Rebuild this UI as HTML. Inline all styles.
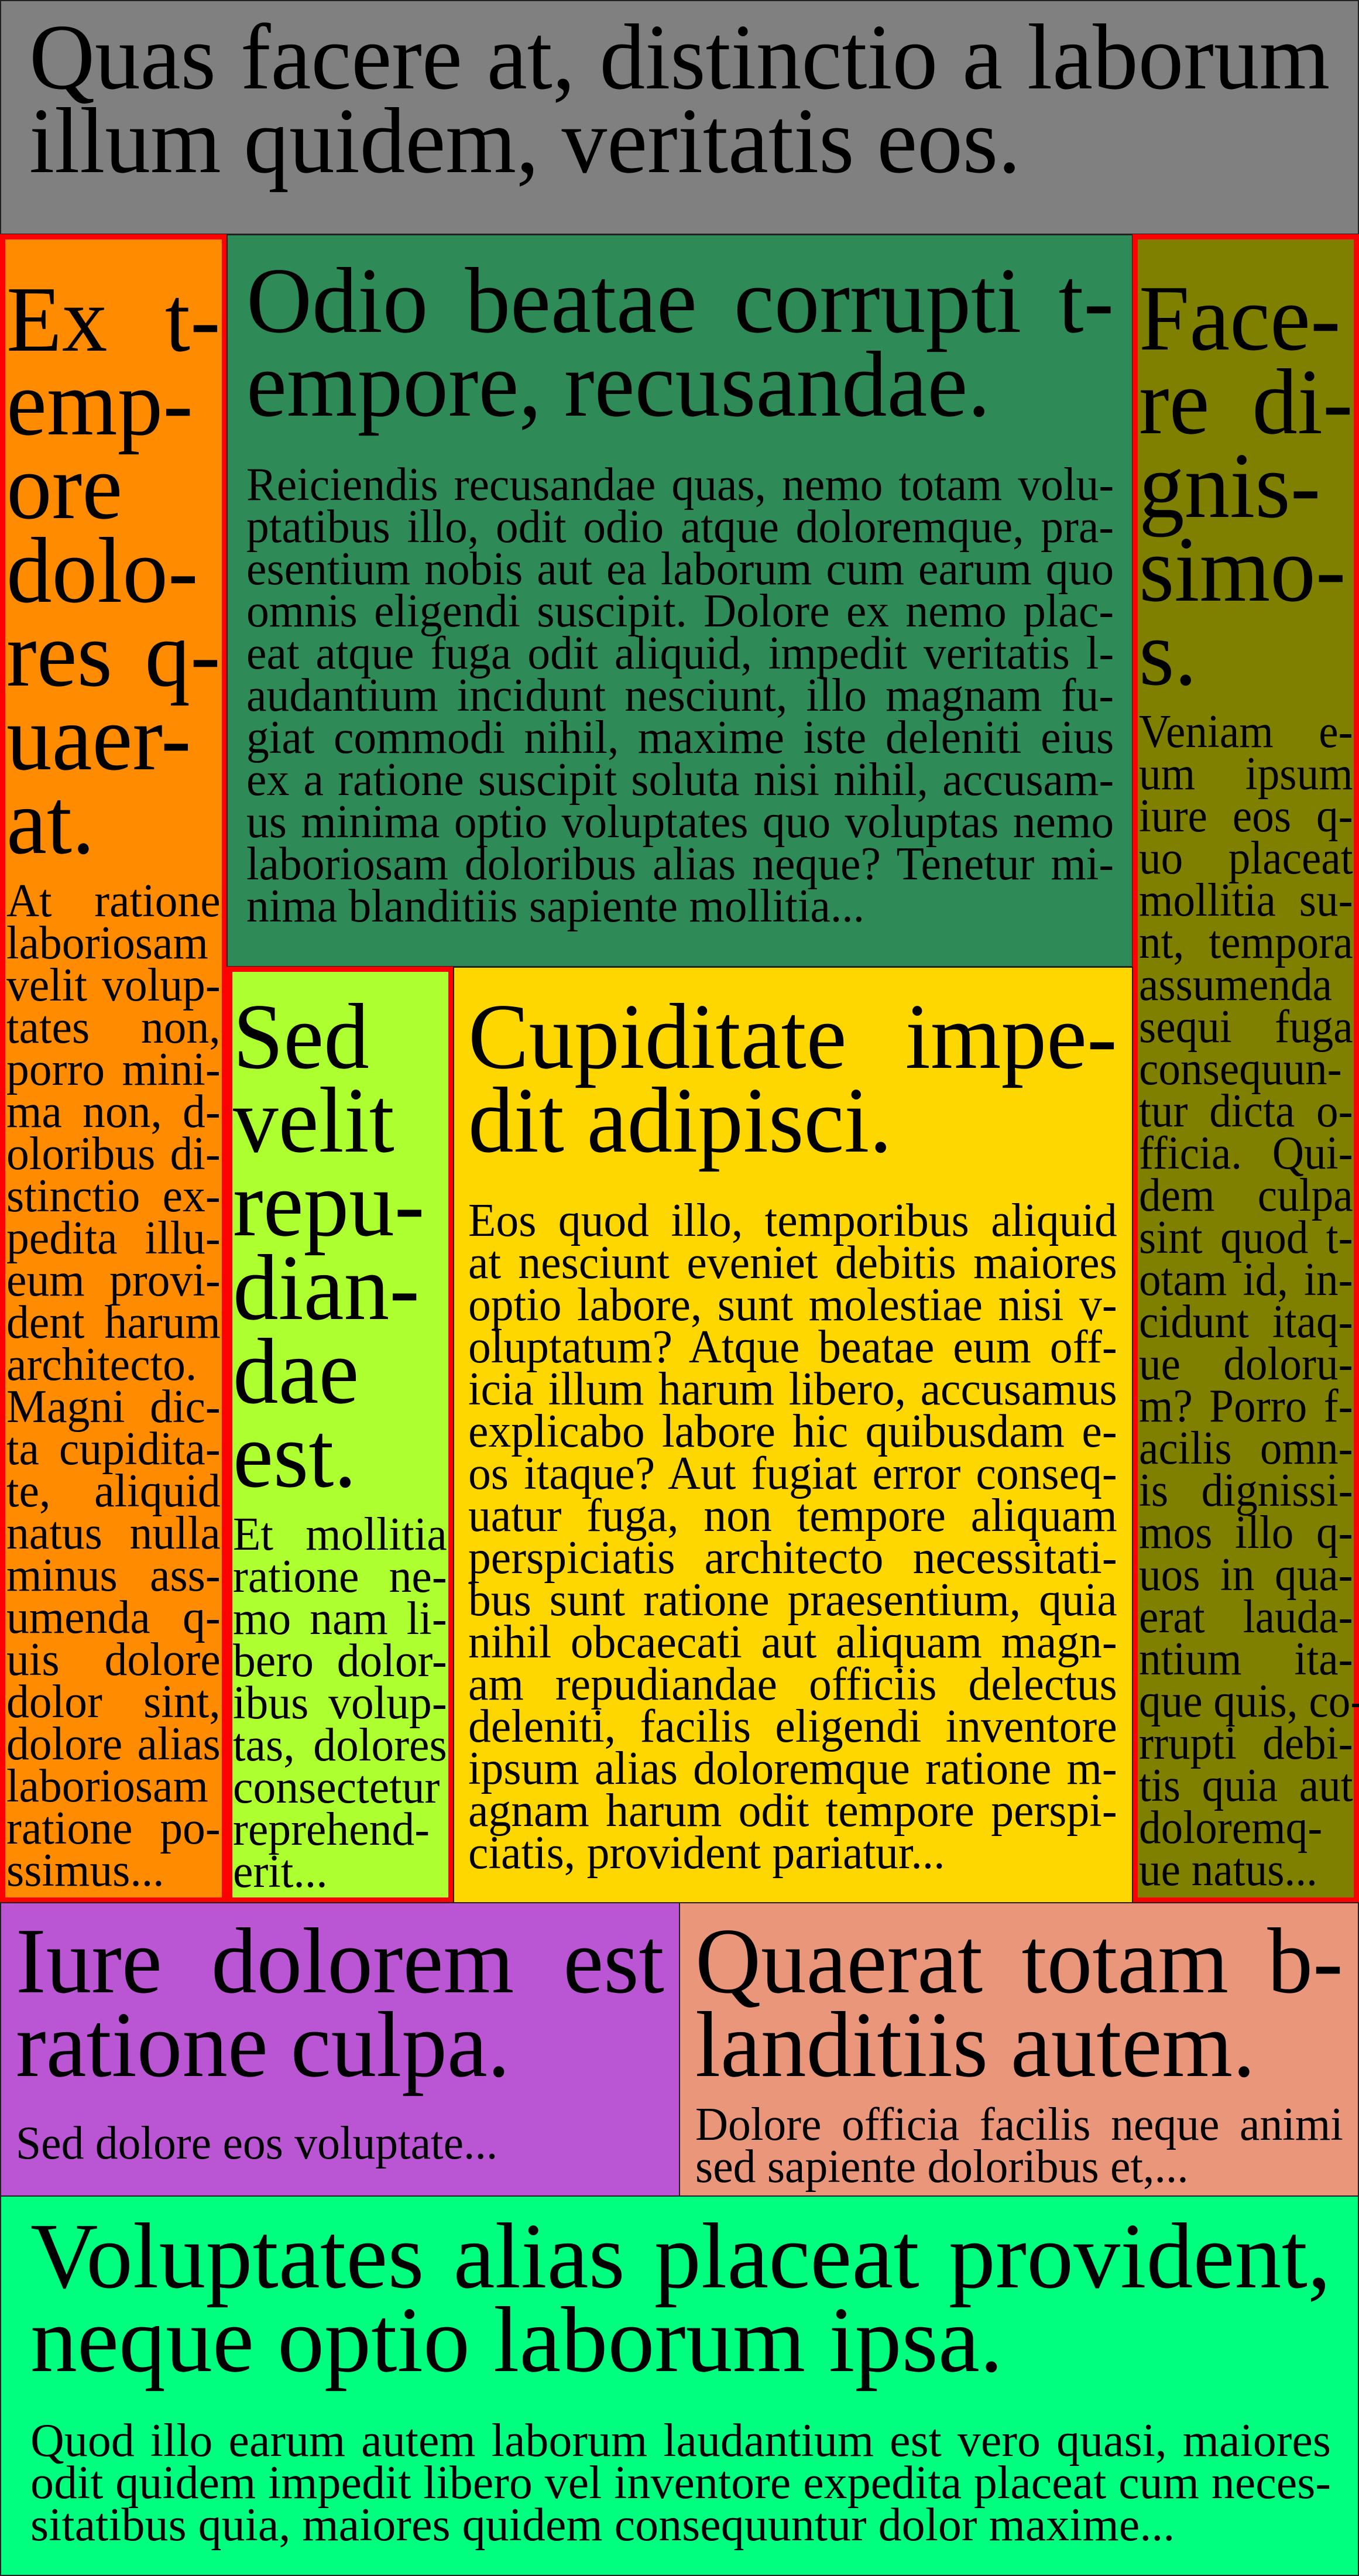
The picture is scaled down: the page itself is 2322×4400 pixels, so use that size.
<!DOCTYPE html>
<html><head><meta charset="utf-8">
<style>
html,body{margin:0;padding:0;}
body{width:2322px;height:4400px;position:relative;overflow:hidden;font-family:"Liberation Serif","Times New Roman",serif;color:#000;}
.box{position:absolute;box-sizing:border-box;}
.blk{border:2px solid #222;}
.red{border:9px solid #ff0000;}
.t{position:absolute;transform-origin:0 0;}
.s{transform:scaleX(0.97);}
.s2{transform:scaleX(0.94);}
.h{font-size:160px;line-height:143px;}
.b{font-size:80px;line-height:72px;}
.t div{white-space:nowrap;text-align:left;}
.t div.j{text-align:justify;text-align-last:justify;}
</style></head><body>

<div class="box blk" style="left:0;top:0;width:2322px;height:401px;background:#808080;"></div>
<div class="box red" style="left:0;top:400px;width:388px;height:2850px;background:#ff8c00;"></div>
<div class="box blk" style="left:387px;top:400px;width:1549px;height:1252px;background:#2e8b57;"></div>
<div class="box red" style="left:1935px;top:400px;width:387px;height:2850px;background:#808000;"></div>
<div class="box red" style="left:388px;top:1651px;width:387px;height:1599px;background:#adff2f;"></div>
<div class="box blk" style="left:774px;top:1651px;width:1162px;height:1600px;background:#ffd700;"></div>
<div class="box blk" style="left:0;top:3249px;width:1162px;height:503px;background:#ba55d3;"></div>
<div class="box blk" style="left:1160px;top:3249px;width:1162px;height:503px;background:#e9967a;"></div>
<div class="box blk" style="left:0;top:3750px;width:2322px;height:650px;background:#00ff7f;"></div>

<!-- header -->
<div class="t h s" style="left:50px;top:26px;width:2291px;">
<div class="j">Quas facere at, distinctio a laborum</div>
<div>illum quidem, veritatis eos.</div>
</div>

<!-- orange -->
<div class="t h s" style="left:11px;top:474px;width:377px;">
<div class="j">Ex t-</div><div class="j">emp-</div><div class="j">ore</div><div class="j">dolo-</div><div class="j">res q-</div><div class="j">uaer-</div><div>at.</div>
</div>
<div class="t b s" style="left:11px;top:1503px;width:377px;">
<div class="j">At ratione</div><div class="j">laboriosam</div><div class="j">velit volup-</div><div class="j">tates non,</div><div class="j">porro mini-</div><div class="j">ma non, d-</div><div class="j">oloribus di-</div><div class="j">stinctio ex-</div><div class="j">pedita illu-</div><div class="j">eum provi-</div><div class="j">dent harum</div><div class="j">architecto.</div><div class="j">Magni dic-</div><div class="j">ta cupidita-</div><div class="j">te, aliquid</div><div class="j">natus nulla</div><div class="j">minus ass-</div><div class="j">umenda q-</div><div class="j">uis dolore</div><div class="j">dolor sint,</div><div class="j">dolore alias</div><div class="j">laboriosam</div><div class="j">ratione po-</div><div>ssimus...</div>
</div>

<!-- green -->
<div class="t h s" style="left:421px;top:442px;width:1528px;">
<div class="j">Odio beatae corrupti t-</div><div>empore, recusandae.</div>
</div>
<div class="t b s" style="left:421px;top:792px;width:1528px;">
<div class="j">Reiciendis recusandae quas, nemo totam volu-</div>
<div class="j">ptatibus illo, odit odio atque doloremque, pra-</div>
<div class="j">esentium nobis aut ea laborum cum earum quo</div>
<div class="j">omnis eligendi suscipit. Dolore ex nemo plac-</div>
<div class="j">eat atque fuga odit aliquid, impedit veritatis l-</div>
<div class="j">audantium incidunt nesciunt, illo magnam fu-</div>
<div class="j">giat commodi nihil, maxime iste deleniti eius</div>
<div class="j">ex a ratione suscipit soluta nisi nihil, accusam-</div>
<div class="j">us minima optio voluptates quo voluptas nemo</div>
<div class="j">laboriosam doloribus alias neque? Tenetur mi-</div>
<div>nima blanditiis sapiente mollitia...</div>
</div>

<!-- olive -->
<div class="t h s" style="left:1946px;top:472px;width:377px;">
<div class="j">Face-</div><div class="j">re di-</div><div class="j">gnis-</div><div class="j">simo-</div><div>s.</div>
</div>
<div class="t b s2" style="left:1946px;top:1214px;width:389px;">
<div class="j">Veniam e-</div><div class="j">um ipsum</div><div class="j">iure eos q-</div><div class="j">uo placeat</div><div class="j">mollitia su-</div><div class="j">nt, tempora</div><div class="j">assumenda</div><div class="j">sequi fuga</div><div class="j">consequun-</div><div class="j">tur dicta o-</div><div class="j">fficia. Qui-</div><div class="j">dem culpa</div><div class="j">sint quod t-</div><div class="j">otam id, in-</div><div class="j">cidunt itaq-</div><div class="j">ue doloru-</div><div class="j">m? Porro f-</div><div class="j">acilis omn-</div><div class="j">is dignissi-</div><div class="j">mos illo q-</div><div class="j">uos in qua-</div><div class="j">erat lauda-</div><div class="j">ntium ita-</div><div class="j">que quis, co-</div><div class="j">rrupti debi-</div><div class="j">tis quia aut</div><div class="j">doloremq-</div><div>ue natus...</div>
</div>

<!-- yellow-green -->
<div class="t h s" style="left:398px;top:1699px;width:377px;">
<div class="j">Sed</div><div class="j">velit</div><div class="j">repu-</div><div class="j">dian-</div><div class="j">dae</div><div>est.</div>
</div>
<div class="t b s" style="left:398px;top:2585px;width:377px;">
<div class="j">Et mollitia</div><div class="j">ratione ne-</div><div class="j">mo nam li-</div><div class="j">bero dolor-</div><div class="j">ibus volup-</div><div class="j">tas, dolores</div><div class="j">consectetur</div><div class="j">reprehend-</div><div>erit...</div>
</div>

<!-- yellow -->
<div class="t h s" style="left:800px;top:1699px;width:1143px;">
<div class="j">Cupiditate impe-</div><div>dit adipisci.</div>
</div>
<div class="t b s" style="left:800px;top:2049px;width:1143px;">
<div class="j">Eos quod illo, temporibus aliquid</div>
<div class="j">at nesciunt eveniet debitis maiores</div>
<div class="j">optio labore, sunt molestiae nisi v-</div>
<div class="j">oluptatum? Atque beatae eum off-</div>
<div class="j">icia illum harum libero, accusamus</div>
<div class="j">explicabo labore hic quibusdam e-</div>
<div class="j">os itaque? Aut fugiat error conseq-</div>
<div class="j">uatur fuga, non tempore aliquam</div>
<div class="j">perspiciatis architecto necessitati-</div>
<div class="j">bus sunt ratione praesentium, quia</div>
<div class="j">nihil obcaecati aut aliquam magn-</div>
<div class="j">am repudiandae officiis delectus</div>
<div class="j">deleniti, facilis eligendi inventore</div>
<div class="j">ipsum alias doloremque ratione m-</div>
<div class="j">agnam harum odit tempore perspi-</div>
<div>ciatis, provident pariatur...</div>
</div>

<!-- purple -->
<div class="t h s" style="left:27px;top:3278px;width:1142px;">
<div class="j">Iure dolorem est</div><div>ratione culpa.</div>
</div>
<div class="t b s" style="left:27px;top:3625px;width:1142px;">
<div>Sed dolore eos voluptate...</div>
</div>

<!-- salmon -->
<div class="t h s" style="left:1188px;top:3278px;width:1141px;">
<div class="j">Quaerat totam b-</div><div>landitiis autem.</div>
</div>
<div class="t b s" style="left:1188px;top:3593px;width:1141px;">
<div class="j">Dolore officia facilis neque animi</div><div>sed sapiente doloribus et,...</div>
</div>

<!-- footer -->
<div class="t h" style="left:52px;top:3782px;width:2222px;">
<div class="j">Voluptates alias placeat provident,</div><div>neque optio laborum ipsa.</div>
</div>
<div class="t b" style="left:52px;top:4133px;width:2222px;">
<div class="j">Quod illo earum autem laborum laudantium est vero quasi, maiores</div>
<div class="j">odit quidem impedit libero vel inventore expedita placeat cum neces-</div>
<div>sitatibus quia, maiores quidem consequuntur dolor maxime...</div>
</div>

</body></html>
